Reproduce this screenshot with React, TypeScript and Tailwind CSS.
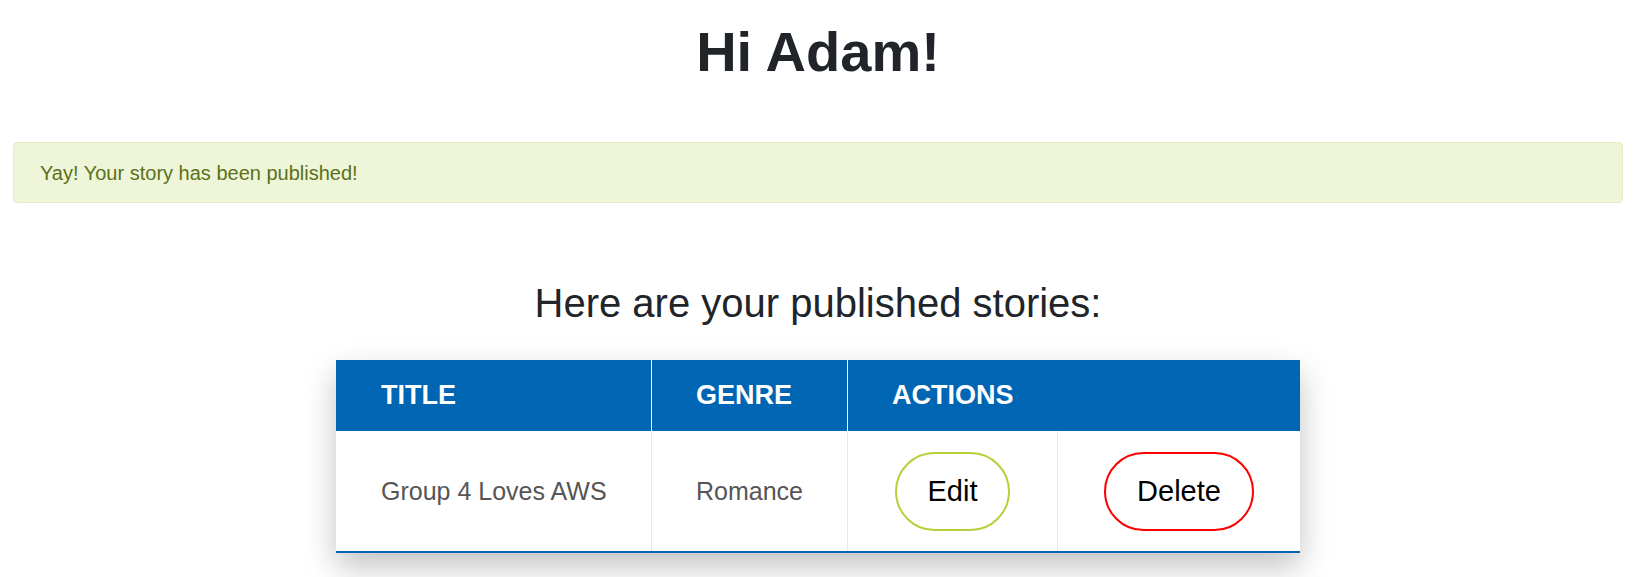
export default function App() {
  const font = { fontFamily: '"Liberation Sans", Arial, sans-serif' };

  return (
    <div className="min-h-[577px] bg-white pl-[13px] pr-[19px]" style={font}>
      {/* Greeting */}
      <h1 className="mt-[20px] text-center text-[56px] font-bold leading-[64px] text-[#212529]">
        Hi Adam!
      </h1>

      {/* Success alert */}
      <div className="mt-[58px] rounded-[4px] border border-[#e2edc0] bg-[#eef5d8] pb-[17px] pl-[26px] pt-[18px] text-[20px] leading-[24px] text-[#5b7119]">
        Yay! Your story has been published!
      </div>

      <h2 className="mt-[76px] text-center text-[40px] leading-[48px] text-[#212529]">
        Here are your published stories:
      </h2>

      {/* Stories table */}
      <div className="mx-auto mt-[33px] w-[964px] border-b-2 border-[#0065b3] bg-white shadow-[0_14px_30px_rgba(0,0,0,0.24)]">
        <table className="w-full table-fixed border-separate border-spacing-0">
          <colgroup>
            <col className="w-[315px]" />
            <col className="w-[196px]" />
            <col className="w-[210px]" />
            <col className="w-[243px]" />
          </colgroup>
          <thead>
            <tr className="bg-[#0065b3] text-white">
              <th className="h-[71px] pl-[45px] text-left align-middle text-[27px] font-bold leading-[31px]">
                TITLE
              </th>
              <th className="h-[71px] border-l border-white pl-[44px] text-left align-middle text-[27px] font-bold leading-[31px]">
                GENRE
              </th>
              <th
                colSpan={2}
                className="h-[71px] border-l border-white pl-[44px] text-left align-middle text-[27px] font-bold leading-[31px]"
              >
                ACTIONS
              </th>
            </tr>
          </thead>
          <tbody>
            <tr>
              <td className="h-[120px] pl-[45px] align-middle text-[25px] leading-[29px] text-[#555555]">
                Group 4 Loves AWS
              </td>
              <td className="h-[120px] border-l border-[#e8e8e8] pl-[44px] align-middle text-[25px] leading-[29px] text-[#555555]">
                Romance
              </td>
              <td className="h-[120px] border-l border-[#e8e8e8] text-center align-middle">
                <button className="inline-flex h-[79px] items-center rounded-full border-2 border-[#b5d13a] bg-white px-[31px] text-[29px] leading-[34px] text-black">
                  Edit
                </button>
              </td>
              <td className="h-[120px] border-l border-[#e8e8e8] text-center align-middle">
                <button className="inline-flex h-[79px] items-center rounded-full border-2 border-[#ff0000] bg-white px-[31px] text-[29px] leading-[34px] text-black">
                  Delete
                </button>
              </td>
            </tr>
          </tbody>
        </table>
      </div>
    </div>
  );
}
